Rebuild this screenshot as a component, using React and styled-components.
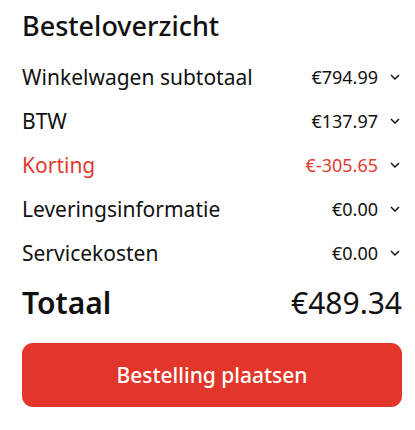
import React from "react";
import styled, { createGlobalStyle } from "styled-components";

const GlobalStyle = createGlobalStyle`
  * { box-sizing: border-box; }
  body {
    margin: 0;
    background: #ffffff;
    font-family: "Noto Sans", "Open Sans", sans-serif;
    color: #111111;
  }
`;

const rows = [
  { label: "Winkelwagen subtotaal", value: "€794.99" },
  { label: "BTW", value: "€137.97" },
  { label: "Korting", value: "€-305.65", discount: true },
  { label: "Leveringsinformatie", value: "€0.00" },
  { label: "Servicekosten", value: "€0.00" },
];

const Chevron = () => (
  <svg width="10" height="6" viewBox="0 0 10 6" fill="none">
    <path d="M1 1l4 4 4-4" stroke="#111" strokeWidth="1.5" />
  </svg>
);

const App = () => {
  return (
    <>
      <GlobalStyle />
      <Panel>
        <Title>Besteloverzicht</Title>
        <List>
          {rows.map((r) => (
            <Row key={r.label} $discount={r.discount}>
              <Label>{r.label}</Label>
              <Value>{r.value}</Value>
              <Toggle>
                <Chevron />
              </Toggle>
            </Row>
          ))}
        </List>
        <TotalRow>
          <TotalLabel>Totaal</TotalLabel>
          <TotalValue>€489.34</TotalValue>
        </TotalRow>
        <OrderButton>Bestelling plaatsen</OrderButton>
      </Panel>
    </>
  );
};

export default App;

const Panel = styled.div`
  width: 415px;
  height: 430px;
  padding: 6px 13px 0 22px;
`;

const Title = styled.h2`
  margin: 0;
  font-size: 27px;
  font-weight: 500;
  line-height: 40px;
`;

const List = styled.div`
  margin-top: 9px;
  display: flex;
  flex-direction: column;
`;

const Row = styled.div`
  display: flex;
  align-items: center;
  height: 44px;
  color: ${(p) => (p.$discount ? "#e03c2f" : "#111111")};
`;

const Label = styled.span`
  flex: 1;
  font-size: 21px;
`;

const Value = styled.span`
  font-size: 18px;
`;

const Toggle = styled.span`
  width: 24px;
  display: flex;
  justify-content: flex-end;
  padding-right: 2px;
`;

const TotalRow = styled.div`
  display: flex;
  align-items: center;
  justify-content: space-between;
  height: 50px;
  margin-top: 2px;
`;

const TotalLabel = styled.span`
  font-size: 30px;
  font-weight: 600;
`;

const TotalValue = styled.span`
  font-size: 30px;
  font-weight: 400;
`;

const OrderButton = styled.button`
  display: block;
  width: 380px;
  height: 64px;
  margin-top: 16px;
  border: none;
  border-radius: 11px;
  background: #e2362a;
  color: #ffffff;
  font-family: inherit;
  font-size: 21px;
  font-weight: 500;
`;
